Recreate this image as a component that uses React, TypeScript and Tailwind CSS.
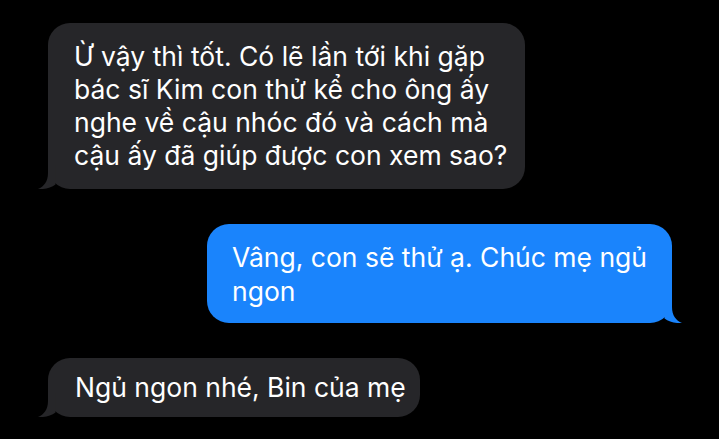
import React from 'react';

const font = { fontFamily: 'Inter, "Noto Sans", "Liberation Sans", sans-serif' };

function Tail({ color, side }: { color: string; side: 'left' | 'right' }) {
  // small curved tail at the bottom corner of a bubble
  return (
    <svg
      viewBox="0 0 30 30"
      className={
        side === 'left'
          ? 'absolute -left-[10px] bottom-0 w-[30px] h-[30px]'
          : 'absolute -right-[10px] bottom-0 w-[30px] h-[30px] -scale-x-100'
      }
    >
      <path
        d="M10 6 L10 14 C10 22.5 6 27.5 0 30 C7 30.6 13 28.6 17.5 25.4 L17.5 6 Z"
        fill={color}
      />
    </svg>
  );
}

export default function App() {
  return (
    <div
      className="w-[719px] h-[439px] bg-black overflow-hidden flex flex-col items-start gap-[35px] pt-[23px] pl-[48px] pr-[47px] text-white text-[26.5px] whitespace-nowrap"
      style={font}
    >
      {/* Incoming */}
      <div className="relative w-[477px] h-[166px] bg-[#262629] rounded-[22px] pl-[26px] pt-[17px] leading-[33px]">
        Ừ vậy thì tốt. Có lẽ lần tới khi gặp
        <br />
        bác sĩ Kim con thử kể cho ông ấy
        <br />
        nghe về cậu nhóc đó và cách mà
        <br />
        cậu ấy đã giúp được con xem sao?
        <Tail color="#262629" side="left" />
      </div>

      {/* Outgoing */}
      <div className="relative self-end w-[465px] h-[99px] bg-[#1a84fc] rounded-[22px] pl-[25px] pt-[16px] leading-[34px]">
        Vâng, con sẽ thử ạ. Chúc mẹ ngủ
        <br />
        ngon
        <Tail color="#1a84fc" side="right" />
      </div>

      {/* Incoming */}
      <div className="relative w-[372px] h-[59px] bg-[#262629] rounded-[22px] pl-[27px] pt-[13px] leading-[33px]">
        Ngủ ngon nhé, Bin của mẹ
        <Tail color="#262629" side="left" />
      </div>
    </div>
  );
}
